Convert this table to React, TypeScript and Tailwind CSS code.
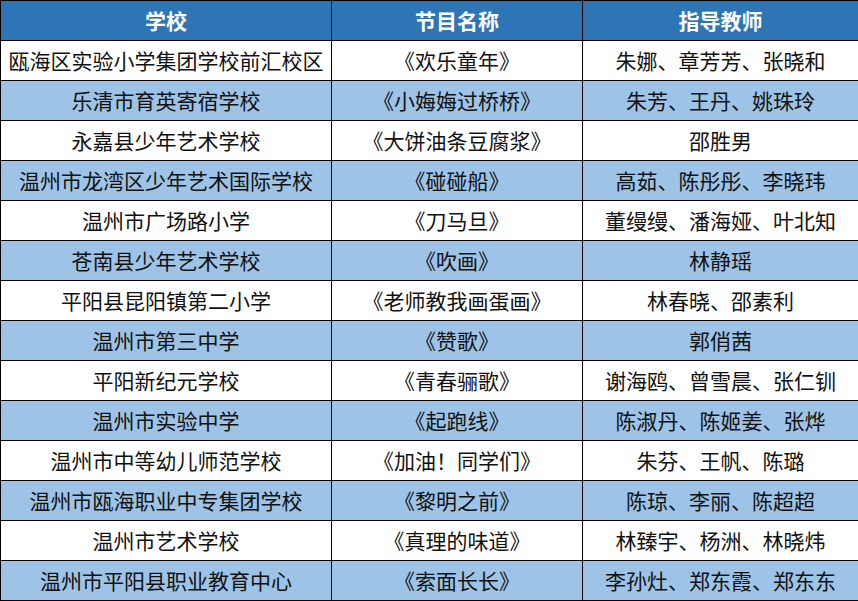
const rows: [string, string, string][] = [
  ["瓯海区实验小学集团学校前汇校区", "《欢乐童年》", "朱娜、章芳芳、张晓和"],
  ["乐清市育英寄宿学校", "《小娒娒过桥桥》", "朱芳、王丹、姚珠玲"],
  ["永嘉县少年艺术学校", "《大饼油条豆腐浆》", "邵胜男"],
  ["温州市龙湾区少年艺术国际学校", "《碰碰船》", "高茹、陈彤彤、李晓玮"],
  ["温州市广场路小学", "《刀马旦》", "董缦缦、潘海娅、叶北知"],
  ["苍南县少年艺术学校", "《吹画》", "林静瑶"],
  ["平阳县昆阳镇第二小学", "《老师教我画蛋画》", "林春晓、邵素利"],
  ["温州市第三中学", "《赞歌》", "郭俏茜"],
  ["平阳新纪元学校", "《青春骊歌》", "谢海鸥、曾雪晨、张仁钏"],
  ["温州市实验中学", "《起跑线》", "陈淑丹、陈姬姜、张烨"],
  ["温州市中等幼儿师范学校", "《加油！同学们》", "朱芬、王帆、陈璐"],
  ["温州市瓯海职业中专集团学校", "《黎明之前》", "陈琼、李丽、陈超超"],
  ["温州市艺术学校", "《真理的味道》", "林臻宇、杨洲、林晓炜"],
  ["温州市平阳县职业教育中心", "《索面长长》", "李孙灶、郑东霞、郑东东"],
];

export default function App() {
  return (
    <div
      className="w-[858px] h-[601px] bg-white overflow-hidden"
      style={{ fontFamily: '"Noto Sans CJK SC", "Noto Sans", sans-serif' }}
    >
      <table className="border-collapse table-fixed w-[858px] text-[21px] leading-none">
        <colgroup>
          <col className="w-[331px]" />
          <col className="w-[251px]" />
          <col className="w-[276px]" />
        </colgroup>
        <thead>
          <tr className="h-[40px] bg-[#2e75b6] text-white">
            <th className="border border-black font-bold">学校</th>
            <th className="border border-black font-bold">节目名称</th>
            <th className="border border-black font-bold">指导教师</th>
          </tr>
        </thead>
        <tbody>
          {rows.map(([school, show, teachers], i) => (
            <tr
              key={school}
              className={i % 2 === 1 ? "h-[40px] bg-[#9dc3e6]" : "h-[40px] bg-white"}
            >
              <td className="border border-black text-center text-[#111] whitespace-nowrap">{school}</td>
              <td className="border border-black text-center text-[#111] whitespace-nowrap">{show}</td>
              <td className="border border-black text-center text-[#111] whitespace-nowrap">{teachers}</td>
            </tr>
          ))}
        </tbody>
      </table>
    </div>
  );
}
